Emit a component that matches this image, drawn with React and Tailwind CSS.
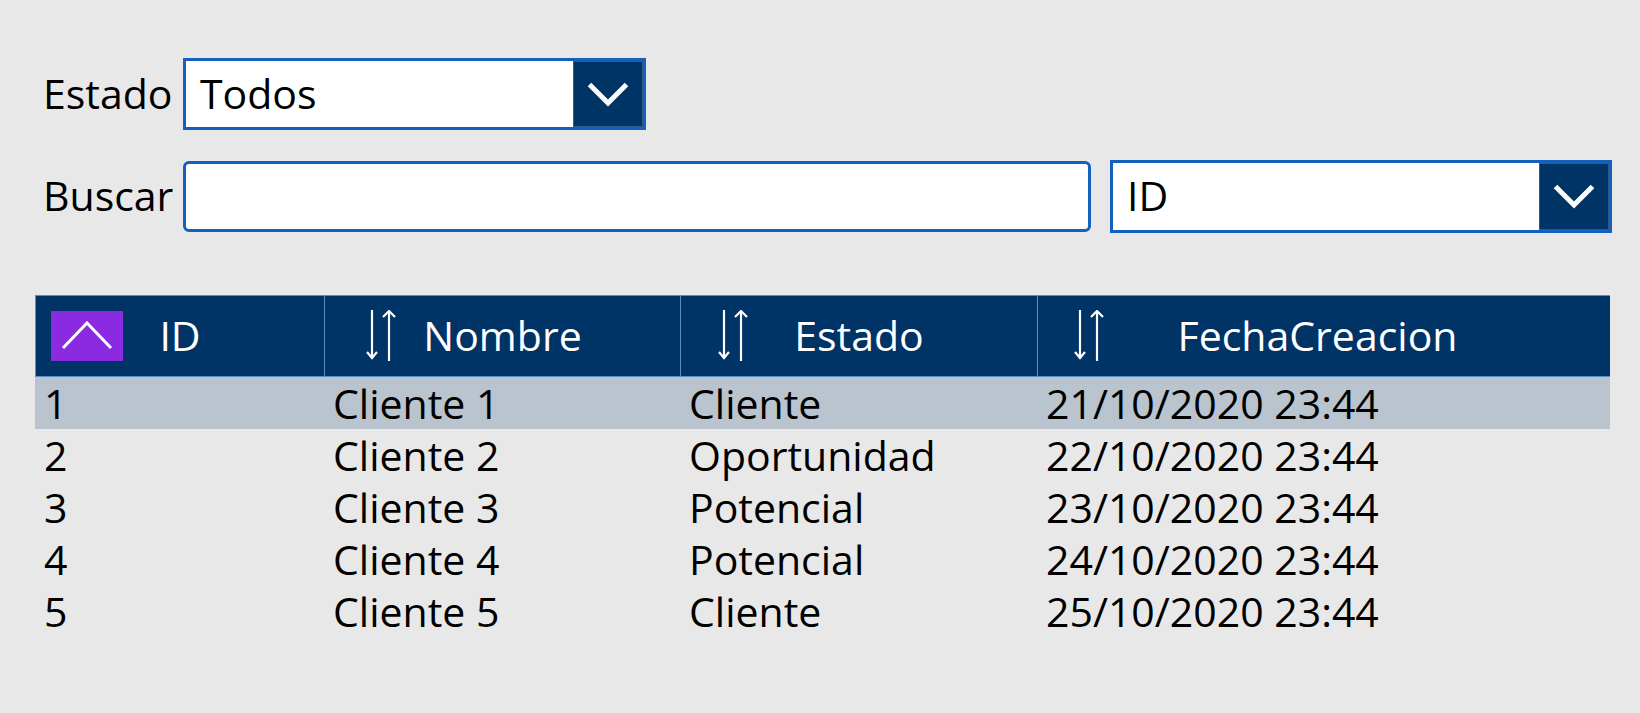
import React from "react";

const font = { fontFamily: "'Open Sans', 'Noto Sans', sans-serif" };

function ChevronDown() {
  return (
    <svg width="44" height="26" viewBox="0 0 44 26">
      <polyline points="3.5,3.5 22,22 40.5,3.5" fill="none" stroke="white" strokeWidth="5" />
    </svg>
  );
}

function SortIcon() {
  return (
    <svg width="32" height="52" viewBox="0 0 32 52">
      <g fill="none" stroke="white" strokeWidth="2.2">
        <line x1="6" y1="0" x2="6" y2="48" />
        <polyline points="1,42 6,48 11,42" />
        <line x1="23" y1="1" x2="23" y2="51" />
        <polyline points="17,7 23,1 29,7" />
      </g>
    </svg>
  );
}

function Dropdown({ value, className }) {
  return (
    <div className={"flex bg-white border-[3px] border-[#1560bd] " + className}>
      <div className="flex-1 flex items-center pl-[14px] text-[41px] text-black">{value}</div>
      <div className="w-[70px] bg-[#003366] border border-[#2c5a8c] flex items-center justify-center">
        <ChevronDown />
      </div>
    </div>
  );
}

const rows = [
  ["1", "Cliente 1", "Cliente", "21/10/2020 23:44"],
  ["2", "Cliente 2", "Oportunidad", "22/10/2020 23:44"],
  ["3", "Cliente 3", "Potencial", "23/10/2020 23:44"],
  ["4", "Cliente 4", "Potencial", "24/10/2020 23:44"],
  ["5", "Cliente 5", "Cliente", "25/10/2020 23:44"],
];

const widths = ["w-[289px]", "w-[356px]", "w-[357px]", "w-[573px]"];

export default function App() {
  return (
    <div className="w-full min-h-[713px] bg-[#e8e8e8] pt-[58px]" style={font}>
      <div className="flex items-center h-[72px] pl-[43px]">
        <div className="w-[140px] text-[41px] text-black">Estado</div>
        <Dropdown value="Todos" className="w-[463px] h-[72px]" />
      </div>
      <div className="flex items-center h-[72px] mt-[30px] pl-[43px]">
        <div className="w-[140px] text-[41px] text-black">Buscar</div>
        <div className="w-[908px] h-[71px] bg-white border-[3px] border-[#1560bd] rounded-[6px]" />
        <Dropdown value="ID" className="w-[502px] h-[73px] ml-[19px]" />
      </div>

      <div className="mt-[63px] ml-[35px] w-[1575px]">
        <div className="flex h-[82px] bg-[#003366] border-y border-[#5b8fca] text-white text-[41px]">
          <div className={"relative flex items-center justify-center border-l border-[#5b8fca] " + widths[0]}>
            <div className="absolute left-[15px] top-1/2 -translate-y-1/2 w-[72px] h-[50px] bg-[#8a2be2] flex items-center justify-center">
              <svg width="52" height="30" viewBox="0 0 52 30">
                <polyline points="2,27 26,2 50,27" fill="none" stroke="white" strokeWidth="3" />
              </svg>
            </div>
            <span>ID</span>
          </div>
          <div className={"relative flex items-center justify-center border-l border-[#5b8fca] " + widths[1]}>
            <div className="absolute left-[41px] top-1/2 -translate-y-1/2 flex"><SortIcon /></div>
            <span>Nombre</span>
          </div>
          <div className={"relative flex items-center justify-center border-l border-[#5b8fca] " + widths[2]}>
            <div className="absolute left-[37px] top-1/2 -translate-y-1/2 flex"><SortIcon /></div>
            <span>Estado</span>
          </div>
          <div className={"relative flex items-center justify-center border-l border-[#5b8fca] " + widths[3]}>
            <div className="absolute left-[36px] top-1/2 -translate-y-1/2 flex"><SortIcon /></div>
            <span className="pr-[13px]">FechaCreacion</span>
          </div>
        </div>
        {rows.map((r, i) => (
          <div key={i} className={"flex h-[52px] text-[41px] text-black leading-[52px] " + (i === 0 ? "bg-[#b9c4ce]" : "")}>
            {r.map((c, j) => (
              <div key={j} className={"pl-[9px] whitespace-nowrap " + widths[j]}>{c}</div>
            ))}
          </div>
        ))}
      </div>
    </div>
  );
}
